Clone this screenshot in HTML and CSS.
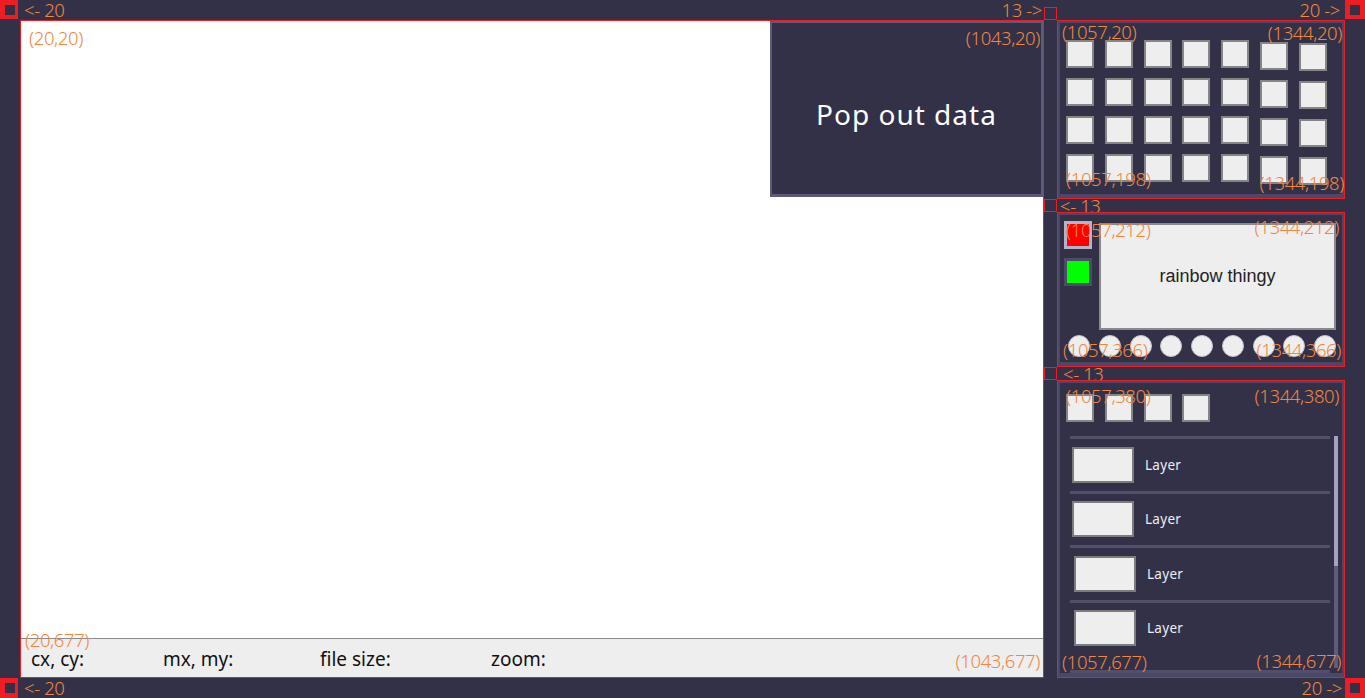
FILE: index.html
```html
<!DOCTYPE html>
<html lang="en">
<head>
<meta charset="utf-8">
<title>Layout</title>
<link rel="stylesheet" href="styles.css">
</head>
<body>
<div class="page">
  <div class="corner c-tl"></div>
  <div class="edge edge-top"><span class="lbl">&lt;- 20</span><span class="lbl">13 -&gt;</span></div>
  <div class="gapbox gb-top"></div>
  <div class="edge edge-top-right"><span class="lbl">20 -&gt;</span></div>
  <div class="corner c-tr"></div>

  <main class="main">
    <div class="canvas"></div>
    <div class="status">
      <span>cx, cy:</span>
      <span>mx, my:</span>
      <span>file size:</span>
      <span>zoom:</span>
    </div>
    <div class="popout">
      <span class="pop-text">Pop out data</span>
      <span class="lbl mark pop-tr">(1043,20)</span>
    </div>
    <span class="lbl mark main-tl">(20,20)</span>
    <span class="lbl mark main-bl">(20,677)</span>
    <span class="lbl mark main-br">(1043,677)</span>
  </main>

  <section class="panel panel-1">
    <div class="panel-inner p1-inner">
      <div class="sqgrid">
        <div class="sq"></div><div class="sq"></div><div class="sq"></div><div class="sq"></div><div class="sq"></div><div class="sq"></div><div class="sq"></div>
        <div class="sq"></div><div class="sq"></div><div class="sq"></div><div class="sq"></div><div class="sq"></div><div class="sq"></div><div class="sq"></div>
        <div class="sq"></div><div class="sq"></div><div class="sq"></div><div class="sq"></div><div class="sq"></div><div class="sq"></div><div class="sq"></div>
        <div class="sq"></div><div class="sq"></div><div class="sq"></div><div class="sq"></div><div class="sq"></div><div class="sq"></div><div class="sq"></div>
      </div>
    </div>
    <span class="lbl mark p1-tl">(1057,20)</span>
    <span class="lbl mark p1-tr">(1344,20)</span>
    <span class="lbl mark p1-bl">(1057,198)</span>
    <span class="lbl mark p1-br">(1344,198)</span>
  </section>

  <div class="gapbox gb-1"></div>
  <div class="gaplbl gl-1"><span class="lbl">&lt;- 13</span></div>

  <section class="panel panel-2">
    <div class="panel-inner p2-inner">
      <div class="p2-top">
        <div class="swatches">
          <div class="swatch sel red"></div>
          <div class="swatch green"></div>
        </div>
        <div class="rainbow">rainbow thingy</div>
      </div>
      <div class="circles">
        <div class="dot"></div><div class="dot"></div><div class="dot"></div>
        <div class="dot"></div><div class="dot"></div><div class="dot"></div>
        <div class="dot"></div><div class="dot"></div><div class="dot"></div>
      </div>
    </div>
    <span class="lbl mark p2-tl">(1057,212)</span>
    <span class="lbl mark p2-tr">(1344,212)</span>
    <span class="lbl mark p2-bl">(1057,366)</span>
    <span class="lbl mark p2-br">(1344,366)</span>
  </section>

  <div class="gapbox gb-2"></div>
  <div class="gaplbl gl-2"><span class="lbl">&lt;- 13</span></div>

  <section class="panel panel-3">
    <div class="panel-inner p3-inner">
      <div class="sqgrid">
        <div class="sq"></div><div class="sq"></div><div class="sq"></div><div class="sq"></div>
      </div>
      <div class="layers-wrap">
        <div class="layers">
          <div class="layer"><div class="thumb"></div><span class="layer-name">Layer</span></div>
          <div class="layer"><div class="thumb"></div><span class="layer-name">Layer</span></div>
          <div class="layer"><div class="thumb"></div><span class="layer-name">Layer</span></div>
          <div class="layer"><div class="thumb"></div><span class="layer-name">Layer</span></div>
        </div>
        <div class="scrollbar"><div class="scroll-thumb"></div><div class="scroll-track"></div></div>
      </div>
    </div>
    <span class="lbl mark p3-tl">(1057,380)</span>
    <span class="lbl mark p3-tr">(1344,380)</span>
    <span class="lbl mark p3-bl">(1057,677)</span>
    <span class="lbl mark p3-br">(1344,677)</span>
  </section>

  <div class="corner c-bl"></div>
  <div class="edge edge-bottom"><span class="lbl">&lt;- 20</span></div>
  <div class="edge edge-bottom-right"><span class="lbl">20 -&gt;</span></div>
  <div class="corner c-br"></div>
</div>
</body>
</html>
```

FILE: styles.css
```css
* { box-sizing: border-box; }
html, body { margin: 0; padding: 0; }
body {
  background: #333148;
  width: 1365px;
  height: 698px;
  overflow: hidden;
  font-family: "Noto Sans", "Open Sans", sans-serif;
}

.page {
  display: grid;
  grid-template-columns: 20px 1024px 13px 288px 20px;
  grid-template-rows: 20px 179px 13px 155px 13px 298px 20px;
  width: 1365px;
  height: 698px;
}

/* orange annotation labels */
.lbl {
  color: #f0873d;
  font-size: 18.5px;
  line-height: 18px;
  font-weight: 300;
  letter-spacing: -0.4px;
  white-space: nowrap;
}
.mark { position: absolute; z-index: 5; }

/* corners */
.corner {
  width: 20px;
  height: 20px;
  border: 5px solid #ee1d23;
  background: #333148;
}
.c-tl { grid-column: 1; grid-row: 1; width: 18px; height: 19px; border-right-width: 3px; border-bottom-width: 4px; }
.c-tr { grid-column: 5; grid-row: 1; height: 19px; border-bottom-width: 4px; }
.c-bl { grid-column: 1; grid-row: 7; width: 18px; border-right-width: 3px; }
.c-br { grid-column: 5; grid-row: 7; }

/* edge labels */
.edge { display: flex; align-items: center; }
.edge-top { grid-column: 2; grid-row: 1; justify-content: space-between; padding: 0 2px 0 4px; }
.edge-top-right { grid-column: 4; grid-row: 1; justify-content: flex-end; padding-right: 5px; }
.edge-bottom { grid-column: 2; grid-row: 7; padding-left: 4px; }
.edge-bottom-right { grid-column: 4; grid-row: 7; justify-content: flex-end; padding-right: 3px; }

/* 13px gap boxes */
.gapbox { border: 1px solid #ee1d23; width: 13px; height: 13px; }
.gb-top { grid-column: 3; grid-row: 1; align-self: end; }
.gb-1 { grid-column: 3; grid-row: 3; }
.gb-2 { grid-column: 3; grid-row: 5; }
.gaplbl { display: flex; align-items: center; }
.gl-1 { grid-column: 4; grid-row: 3; padding-left: 3px; }
.gl-2 { grid-column: 4; grid-row: 5; padding-left: 6px; }

/* main canvas */
.main {
  grid-column: 2;
  grid-row: 2 / 7;
  border: 1px solid #ee1d23;
  position: relative;
  display: flex;
  flex-direction: column;
  background: #ffffff;
}
.canvas { flex: 1; }
.status {
  height: 39px;
  border-top: 1px solid #8a8a8a;
  background: #eeeeee;
  display: grid;
  grid-template-columns: 132px 157px 171px auto;
  align-items: center;
  padding: 2px 0 0 10px;
  font-size: 19px;
  line-height: 22px;
  color: #111111;
}
.popout {
  position: absolute;
  top: 0;
  right: 0;
  width: 273px;
  height: 176px;
  background: #333148;
  border: 2px solid #5d5b79;
  border-bottom-width: 3px;
  display: flex;
  align-items: center;
  justify-content: center;
  padding-top: 10px;
}
.pop-text {
  color: #ffffff;
  font-size: 28px;
  font-weight: 400;
  letter-spacing: 1px;
}
.pop-tr { top: 6px; right: 1px; }
.main-tl { top: 8px; left: 8px; }
.main-bl { bottom: 28px; left: 4px; }
.main-br { bottom: 7px; right: 3px; }

/* right panels */
.panel { border: 1px solid #ee1d23; position: relative; grid-column: 4; }
.panel-1 { grid-row: 2; }
.panel-2 { grid-row: 4; }
.panel-3 { grid-row: 6; }
.panel-inner {
  height: 100%;
  border: 2px solid #4a4866;
  border-bottom-width: 4px;
}

.sqgrid {
  display: grid;
  grid-template-columns: repeat(7, 28px);
  grid-auto-rows: 28px;
  column-gap: 10.8px;
  row-gap: 10px;
  align-items: start;
}
.sq {
  width: 28px;
  height: 28px;
  background: #eeeeee;
  border: 2px solid #858585;
}
.p1-inner .sq:nth-child(7n+6) { margin-top: 2px; }
.p1-inner .sq:nth-child(7n) { margin-top: 3px; }

.p1-inner { padding: 17px 0 0 6px; }
.p1-tl { top: 2px; left: 4px; }
.p1-tr { top: 3px; right: 2px; }
.p1-bl { bottom: 10px; left: 8px; }
.p1-br { bottom: 6px; right: 0; }

/* panel 2 */
.p2-inner { padding: 6px 6px 0 4px; display: flex; flex-direction: column; }
.p2-top { display: flex; gap: 7px; }
.swatches { display: flex; flex-direction: column; gap: 9px; }
.swatch { width: 28px; height: 28px; border: 3px solid #4d4b69; }
.swatch.sel { border-color: #b4b2cc; }
.swatch.red { background: #ff0000; }
.swatch.green { background: #00ff00; }
.rainbow {
  width: 237px;
  height: 107px;
  margin-top: 2px;
  background: #eeeeee;
  border: 2px solid #8a8a8a;
  display: flex;
  align-items: center;
  justify-content: center;
  font-family: "Liberation Sans", Arial, sans-serif;
  font-size: 18px;
  color: #222222;
}
.circles { display: flex; justify-content: space-between; margin: 5px 0 0 4px; }
.dot {
  width: 22px;
  height: 22px;
  border-radius: 50%;
  background: #eeeeee;
  border: 1px solid #c4c4c8;
}
.p2-tl { top: 8px; left: 8px; }
.p2-tr { top: 5px; right: 5px; }
.p2-bl { bottom: 7px; left: 5px; }
.p2-br { bottom: 7px; right: 3px; }

/* panel 3 */
.p3-inner { padding: 11px 0 0 6px; display: flex; flex-direction: column; }
.layers-wrap { display: flex; gap: 4px; margin: 14px 0 0 4px; flex: 1; min-height: 0; }
.layers {
  width: 260px;
  border-bottom: 3px solid #524f6c;
  display: flex;
  flex-direction: column;
  overflow: hidden;
}
.layer {
  border-top: 3px solid #524f6c;
  padding: 7.5px 0 8px 2px;
  display: flex;
  align-items: center;
  gap: 11px;
  flex: none;
}
.layer:nth-child(n+3) { padding-left: 4px; }
.thumb {
  width: 62px;
  height: 36px;
  background: #eeeeee;
  border: 2px solid #7c7c7c;
}
.layer-name {
  color: #eeeef6;
  font-size: 13.5px;
  letter-spacing: 0.3px;
}
.scrollbar { width: 4px; display: flex; flex-direction: column; margin-bottom: 5px; }
.scroll-thumb { height: 130px; background: #a4a2bc; }
.scroll-track { flex: 1; background: #5e5c78; }
.p3-tl { top: 6px; left: 8px; }
.p3-tr { top: 6px; right: 5px; }
.p3-bl { bottom: 6px; left: 4px; }
.p3-br { bottom: 7px; right: 3px; }
```
